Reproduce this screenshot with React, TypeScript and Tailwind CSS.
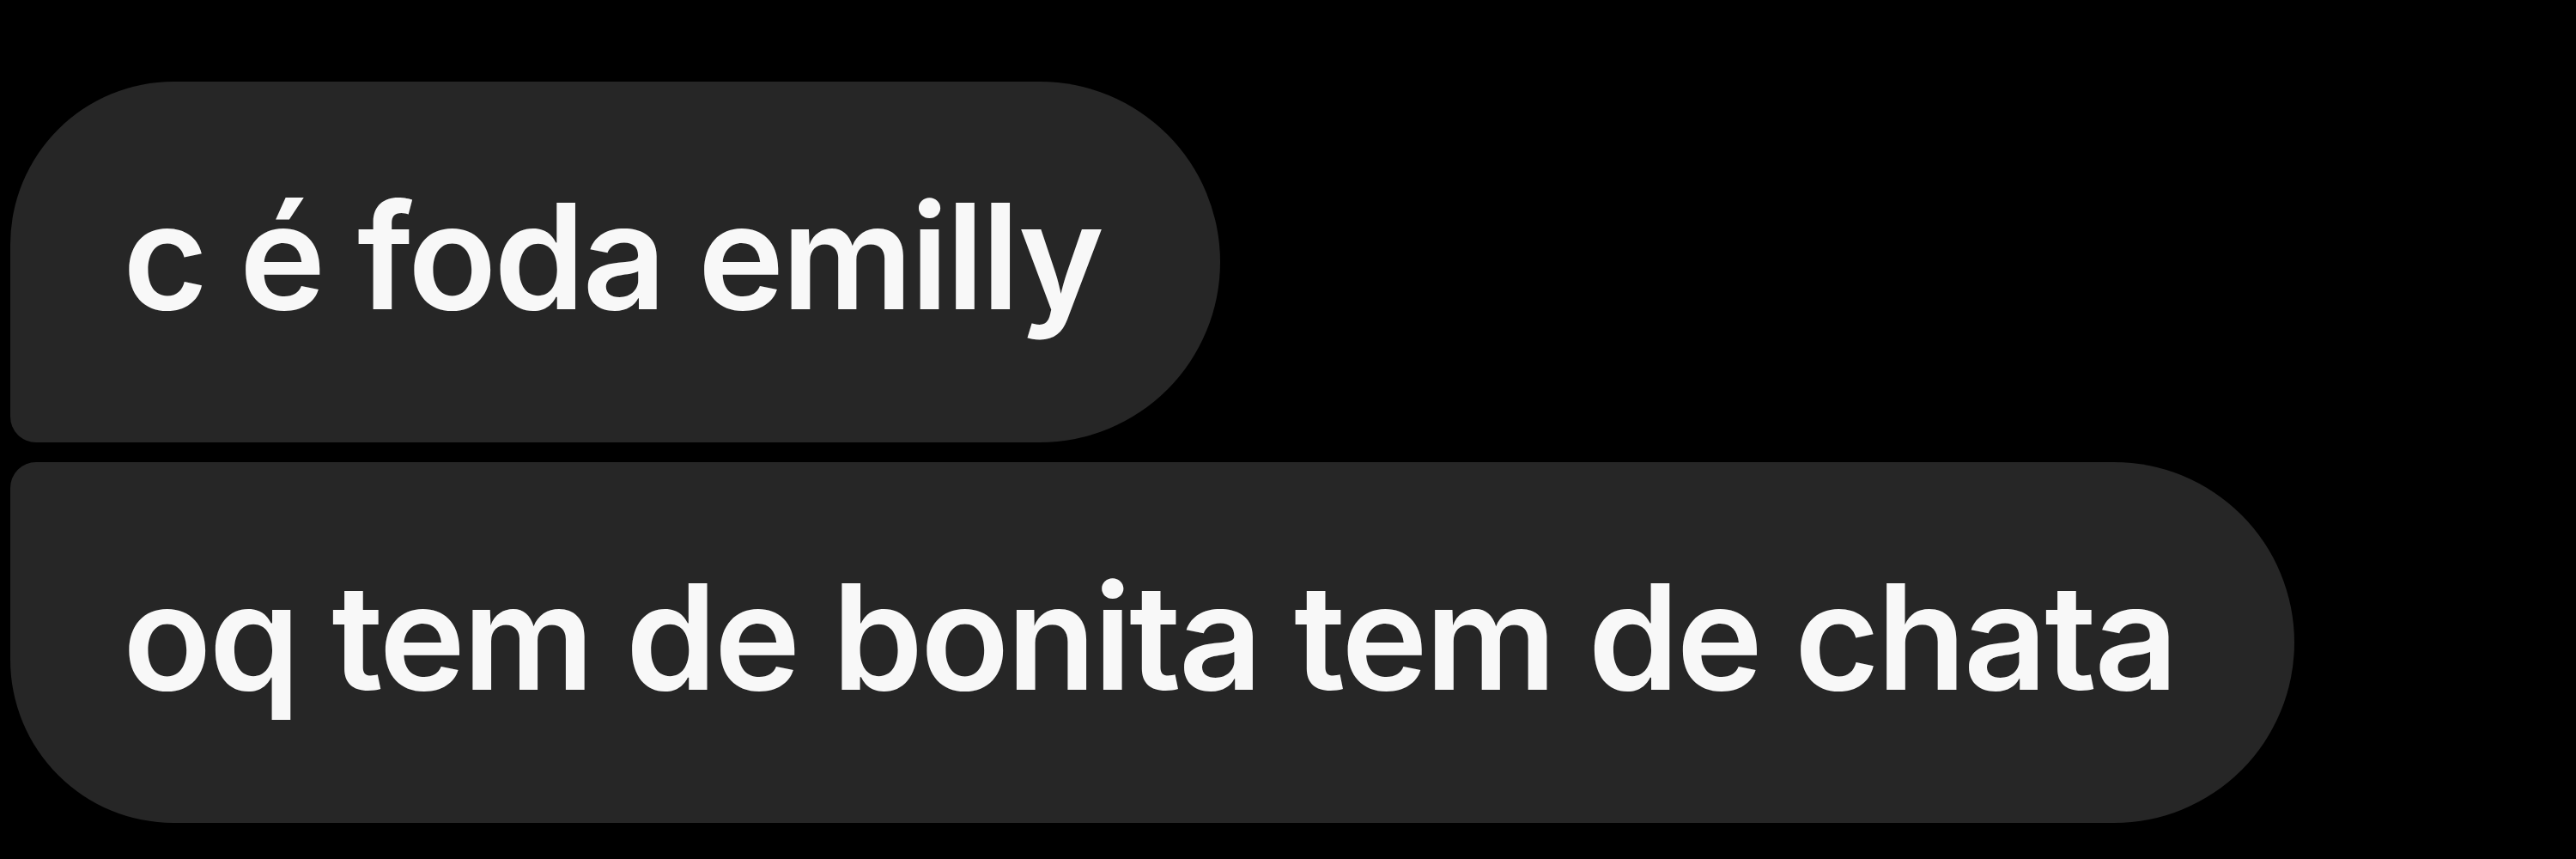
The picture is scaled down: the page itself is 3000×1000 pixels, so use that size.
const messages = [
  { id: 1, text: 'c é foda emilly', shape: 'rounded-tl-[190px] rounded-bl-[30px]' },
  { id: 2, text: 'oq tem de bonita tem de chata', shape: 'rounded-tl-[30px] rounded-bl-[190px]' },
]

export default function App() {
  return (
    <div className="w-[3000px] h-[1000px] bg-black overflow-hidden">
      <div className="flex flex-col items-start gap-[23px] pl-[12px] pt-[95px]">
        {messages.map(m => (
          <div
            key={m.id}
            className={`h-[420px] flex items-center bg-[#262626] rounded-r-[210px] pl-[131px] pr-[138px] ${m.shape}`}
          >
            <span
              className="text-[170px] leading-none font-semibold tracking-[-0.018em] text-[#f8f8f8] whitespace-nowrap pb-[14px]"
              style={{ fontFamily: 'Inter, "Liberation Sans", sans-serif' }}
            >
              {m.text}
            </span>
          </div>
        ))}
      </div>
    </div>
  )
}
